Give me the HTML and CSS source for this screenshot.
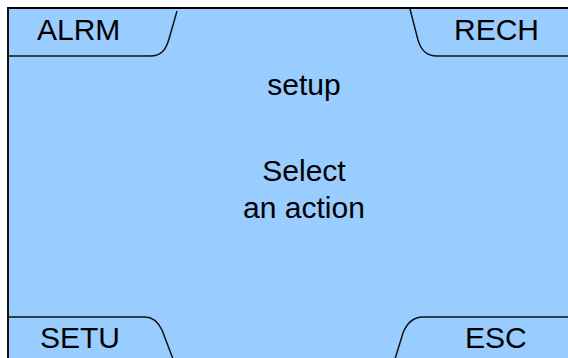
FILE: index.html
```html
<!DOCTYPE html>
<html>
<head>
<meta charset="utf-8">
<link rel="stylesheet" href="styles.css">
</head>
<body>
<div class="screen">
  <div class="bar bar-top">
    <div class="tab tab-tl">
      <svg class="tab-line" width="171" height="48" viewBox="0 0 171 48"><path d="M-3 47 H141 C153 47 157 40 160 30 L168 2"/></svg>
      <span class="label">ALRM</span>
    </div>
    <div class="tab tab-tr">
      <svg class="tab-line" width="163" height="48" viewBox="0 0 163 48"><path d="M5 0 L13 31 C16 41 21 47 32 47 H163"/></svg>
      <span class="label">RECH</span>
    </div>
  </div>
  <div class="content">
    <div class="title">setup</div>
    <div class="message">Select<br>an action</div>
  </div>
  <div class="bar bar-bottom">
    <div class="tab tab-bl">
      <svg class="tab-line" width="171" height="49" viewBox="0 0 171 49"><path d="M-3 8 H136 C143 8 149 13 153 21 L164 50"/></svg>
      <span class="label">SETU</span>
    </div>
    <div class="tab tab-br">
      <svg class="tab-line" width="183" height="49" viewBox="0 0 183 49"><path d="M183 8 H38 C28 8 22 14 18 24 L10 50"/></svg>
      <span class="label">ESC</span>
    </div>
  </div>
</div>
</body>
</html>
```
FILE: styles.css
```css
html, body {
  margin: 0;
  padding: 0;
  background: #ffffff;
  overflow: hidden;
  width: 568px;
  height: 358px;
}

.screen {
  margin: 7px 0 0 7px;
  width: 559px;
  height: 349px;
  border-top: 2px solid #000;
  border-left: 2px solid #111;
  background: #99ccff;
  display: grid;
  grid-template-rows: 48px 1fr 49px;
  font-family: "Liberation Sans", Arial, sans-serif;
  color: #000;
  overflow: hidden;
}

.bar {
  display: flex;
  justify-content: space-between;
}

.tab {
  position: relative;
  font-size: 30px;
  line-height: 36px;
}

.tab-line {
  position: absolute;
  left: 0;
  top: 0;
  overflow: visible;
}

.tab-line path {
  fill: none;
  stroke: #111;
  stroke-width: 1.5;
}

.label {
  position: relative;
  display: block;
}

.tab-tl {
  width: 171px;
  padding-top: 3px;
}
.tab-tl .label { padding-left: 28px; }

.tab-tr {
  width: 163px;
  padding-top: 3px;
}
.tab-tr .label { padding-left: 49px; }

.tab-bl {
  width: 171px;
  padding-top: 11px;
}
.tab-bl .label { padding-left: 31px; }

.tab-br {
  width: 183px;
  padding-top: 11px;
}
.tab-br .label { padding-left: 80px; }

.content {
  display: flex;
  flex-direction: column;
  align-items: center;
  padding-top: 9px;
  padding-left: 31px;
  font-size: 30px;
  line-height: 37px;
  text-align: center;
}

.message {
  margin-top: 49px;
}
```
